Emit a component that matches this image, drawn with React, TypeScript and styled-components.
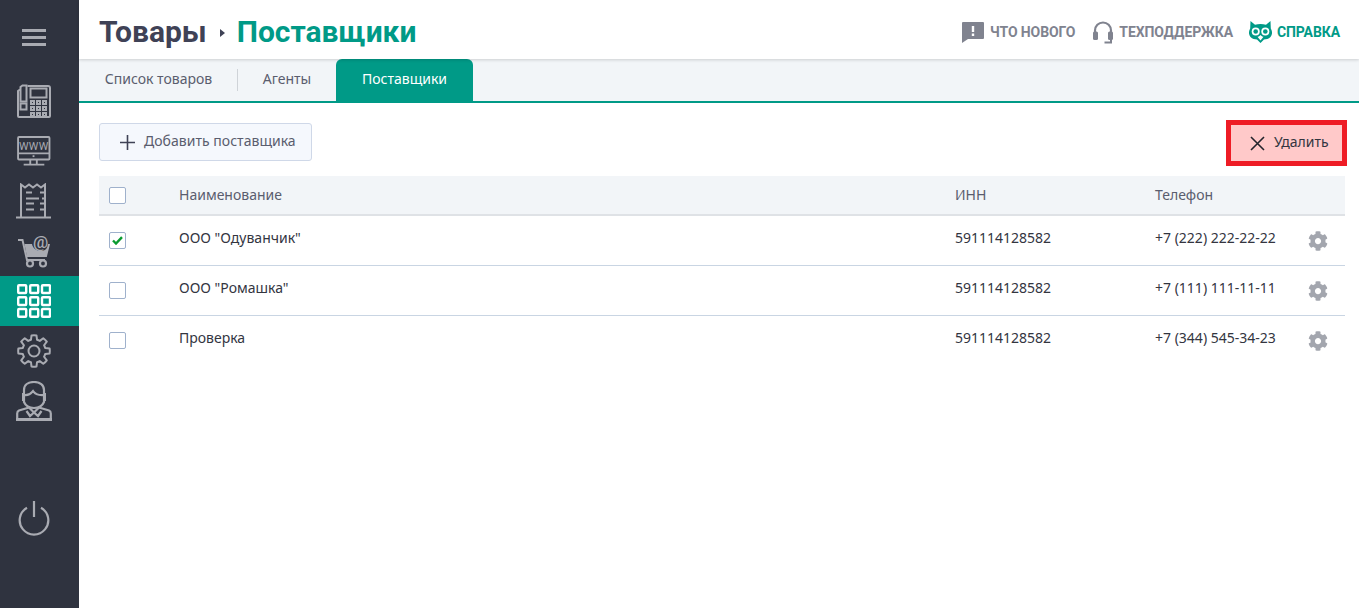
import React from "react";
import styled, { createGlobalStyle } from "styled-components";
import { FaCog } from "react-icons/fa";

const Global = createGlobalStyle`
  html, body { margin: 0; padding: 0; height: 100%; background: #fff; }
  body { font-family: "Noto Sans", "Open Sans", sans-serif; overflow: hidden; }
  #root { height: 100%; }
`;

const TEAL = "#009a87";

const Page = styled.div`
  display: flex;
  width: 1359px;
  height: 608px;
`;
const Sidebar = styled.nav`
  width: 79px;
  flex: none;
  background: #2f333f;
  display: flex;
  flex-direction: column;
  align-items: stretch;
`;
const Burger = styled.div`
  height: 74px;
  padding: 0 11px 2px 0;
  display: flex;
  align-items: center;
  justify-content: center;
`;
const NavItem = styled.div<{ $active?: boolean }>`
  height: 50px;
  padding-right: 11px;
  display: flex;
  align-items: center;
  justify-content: center;
  background: ${(p) => (p.$active ? TEAL : "transparent")};
  color: ${(p) => (p.$active ? "#fff" : "#a9abb2")};
`;
const PowerItem = styled.div`
  margin-top: 71px;
  height: 42px;
  padding-right: 11px;
  display: flex;
  align-items: center;
  justify-content: center;
  color: #a9abb2;
`;
const Main = styled.main`
  flex: 1;
  min-width: 0;
  display: flex;
  flex-direction: column;
`;
const Header = styled.header`
  height: 59px;
  flex: none;
  display: flex;
  align-items: center;
  justify-content: space-between;
  padding: 0 19px 0 20px;
  box-shadow: 0 1px 3px rgba(0, 0, 0, 0.16);
  position: relative;
  z-index: 1;
`;
const Breadcrumb = styled.div`
  display: flex;
  align-items: center;
  font-family: Roboto, "Liberation Sans", sans-serif;
  font-weight: 700;
  font-size: 30px;
  line-height: 34px;
  margin-top: 5px;
`;
const Crumb = styled.span<{ $current?: boolean }>`
  color: ${(p) => (p.$current ? TEAL : "#3f4256")};
`;
const CrumbArrow = styled.span`
  width: 0;
  height: 0;
  margin: 2px 12px 0 13px;
  border-left: 5px solid #3f4256;
  border-top: 4px solid transparent;
  border-bottom: 4px solid transparent;
`;
const HeaderLinks = styled.div`
  display: flex;
  align-items: center;
  margin-top: 5px;
`;
const HeaderLink = styled.a<{ $teal?: boolean; $gap: number; $ml: number }>`
  display: flex;
  align-items: center;
  gap: ${(p) => p.$gap}px;
  margin-left: ${(p) => p.$ml}px;
  font-family: Roboto, "Liberation Sans", sans-serif;
  font-weight: 700;
  font-size: 14px;
  letter-spacing: -0.1px;
  color: ${(p) => (p.$teal ? TEAL : "#80838f")};
`;
const Tabs = styled.div`
  height: 42px;
  flex: none;
  background: #f2f5f8;
  border-bottom: 2px solid ${TEAL};
  display: flex;
  align-items: stretch;
`;
const Tab = styled.div<{ $active?: boolean; $w: number; $divider?: boolean }>`
  width: ${(p) => p.$w}px;
  padding-bottom: 3px;
  box-sizing: border-box;
  display: flex;
  align-items: center;
  justify-content: center;
  font-size: 14px;
  color: ${(p) => (p.$active ? "#fff" : "#5a5d6e")};
  background: ${(p) => (p.$active ? TEAL : "transparent")};
  border-radius: ${(p) => (p.$active ? "6px 6px 0 0" : "0")};
  position: relative;
  ${(p) =>
    p.$divider
      ? `&::after { content: ""; position: absolute; right: 0; top: 10px; height: 22px; width: 1px; background: #cfd3d8; }`
      : ""}
`;
const Content = styled.div`
  padding: 20px 14px 0 20px;
`;
const Toolbar = styled.div`
  display: flex;
  align-items: flex-start;
  justify-content: space-between;
  height: 53px;
`;
const AddButton = styled.button`
  width: 213px;
  height: 38px;
  box-sizing: border-box;
  background: #f5f8fd;
  border: 1px solid #cfd8e8;
  border-radius: 3px;
  display: flex;
  align-items: center;
  gap: 9px;
  padding: 0 0 0 20px;
  font: inherit;
  font-size: 14px;
  color: #5a5d6e;
`;
const ButtonLabel = styled.span<{ $lift: number }>`
  margin-bottom: ${(p) => p.$lift}px;
  letter-spacing: 0.03px;
`;
const DeleteButton = styled.button`
  width: 121px;
  height: 46px;
  margin: -3px -2px 0 0;
  box-sizing: border-box;
  background: #ffc9c9;
  border: 5px solid #ee1c25;
  display: flex;
  align-items: center;
  gap: 9px;
  padding: 0 0 0 19px;
  font: inherit;
  font-size: 14px;
  color: #33353f;
`;
const Row = styled.div<{ $head?: boolean; $last?: boolean }>`
  display: grid;
  grid-template-columns: 80px 776px 200px 1fr;
  align-items: center;
  box-sizing: border-box;
  height: ${(p) => (p.$head ? "40px" : "50px")};
  background: ${(p) => (p.$head ? "#f2f5f8" : "transparent")};
  border-bottom: ${(p) =>
    p.$head ? "2px solid #dfe2e6" : p.$last ? "1px solid transparent" : "1px solid #c9d5e3"};
  font-size: 14px;
  color: ${(p) => (p.$head ? "#5a5d6e" : "#33353f")};
`;
const HeadCell = styled.div`
  white-space: nowrap;
  padding-bottom: 2px;
`;
const Cell = styled.div`
  white-space: nowrap;
  padding-bottom: 6px;
`;
const CheckCell = styled.div`
  padding-left: 10px;
  display: flex;
  align-items: center;
`;
const Check = styled.span`
  width: 17px;
  height: 17px;
  box-sizing: border-box;
  border: 1px solid #9fb1cc;
  border-radius: 2px;
  background: #fff;
  display: flex;
  align-items: center;
  justify-content: center;
`;
const PhoneCell = styled.div`
  display: flex;
  align-items: center;
  justify-content: space-between;
  padding-right: 17px;
  white-space: nowrap;
`;
const PhoneText = styled.span`
  padding-bottom: 6px;
`;
const Cog = styled(FaCog)`
  width: 20px;
  height: 20px;
  color: #a3a6ae;
`;

const S = { fill: "none", stroke: "currentColor", strokeWidth: 2 } as const;

const IconPhone = () => (
  <svg width="34" height="34" viewBox="0 0 34 34" {...S}>
    <path d="M3 5.500L1 7v25a1 1 0 0 0 1 1h30a1 1 0 0 0 1-1V4a2 2 0 0 0-2-2H10.500" />
    <path d="M3.500 17.500V3l2-1.500h4V17.500z" />
    <rect x="3.500" y="19.500" width="6" height="6" />
    <rect x="13.500" y="4.500" width="16" height="9" />
    <g fill="currentColor" stroke="none">
      {[13, 19, 25].flatMap((x) =>
        [16, 22, 28].map((y) => (
          <path key={`${x}-${y}`} fillRule="evenodd" d={`M${x} ${y}h5v5h-5zM${x + 2} ${y + 2}v1h1v-1z`} />
        ))
      )}
    </g>
  </svg>
);
const IconWww = () => (
  <svg width="34" height="30" viewBox="0 0 36 32" {...S}>
    <rect x="1" y="1" width="33.500" height="24" rx="1" />
    <path d="M1 18.500h33.500M14 25v6M21 25v6M7 30.500h22" />
    <rect x="16.500" y="20.500" width="2" height="2" fill="currentColor" stroke="none" />
    <text x="17.700" y="14.800" textAnchor="middle" fontFamily="Roboto, Liberation Sans, sans-serif" fontSize="11.500" stroke="none" fill="currentColor" letterSpacing="0.300">WWW</text>
  </svg>
);
const IconReceipt = () => (
  <svg width="38" height="36" viewBox="0 0 38 36" {...S}>
    <path d="M6 34V1.500l4 3 4-3 4 3 4-3 4 3 4-3V34" />
    <path d="M1 34.500h35" />
    <path d="M11 9.500h6M25 9.500h4M11 15.500h13M27 15.500h3M11 20.500h8M25 20.500h4M11 26.500h8M25 26.500h4" />
  </svg>
);
const IconCart = () => (
  <svg width="34" height="34" viewBox="0 0 34 34" overflow="visible">
    <path d="M1 6h4.500L10 26h18" fill="none" stroke="currentColor" strokeWidth="2" />
    <path d="M7.500 10h7.500c.8 4 4 7 9 7 4 0 6.500-2.500 7-7l2 0-3.200 13H10z" fill="currentColor" />
    <circle cx="13" cy="29.500" r="3" fill="none" stroke="currentColor" strokeWidth="2.200" />
    <circle cx="26" cy="29.500" r="3" fill="none" stroke="currentColor" strokeWidth="2.200" />
    <text x="23.500" y="14" textAnchor="middle" fontFamily="Roboto, Liberation Sans, sans-serif" fontSize="17" fontWeight="500" fill="currentColor">@</text>
  </svg>
);
const IconGrid = () => (
  <svg width="34" height="34" viewBox="0 0 34 34" fill="none" stroke="currentColor" strokeWidth="2.400">
    {[1.200, 13.200, 25].flatMap((x) =>
      [1.200, 13.200, 25].map((y) => (
        <rect key={`${x}-${y}`} x={x} y={y} width="8" height="7.800" rx="0.800" />
      ))
    )}
  </svg>
);
const gearPath = (cx: number, cy: number, ro: number, ri: number, n: number) => {
  const pts: string[] = [];
  for (let i = 0; i < n; i++) {
    const a = (i / n) * Math.PI * 2 - Math.PI / 2;
    const w = Math.PI / n;
    const p = (r: number, t: number) => `${(cx + r * Math.cos(t)).toFixed(2)} ${(cy + r * Math.sin(t)).toFixed(2)}`;
    pts.push(`${i ? "L" : "M"}${p(ri, a - w * 0.68)}`, `L${p(ro, a - w * 0.4)}`, `A${ro} ${ro} 0 0 1 ${p(ro, a + w * 0.4)}`, `L${p(ri, a + w * 0.68)}`);
    pts.push(`A${ri} ${ri} 0 0 1 ${p(ri, a + 2 * w - w * 0.68)}`);
  }
  return pts.join(" ") + "Z";
};
const IconGear = () => (
  <svg width="34" height="34" viewBox="0 0 34 34" fill="none" stroke="currentColor" strokeWidth="2" strokeLinejoin="round">
    <path d={gearPath(17, 17, 15.800, 11.600, 8)} />
    <circle cx="17" cy="17" r="5.500" />
  </svg>
);
const IconAgent = () => (
  <svg width="36" height="40" viewBox="0 0 36 40" fill="none" stroke="currentColor" strokeWidth="2.200">
    <path d="M8 21V9c0-5 4-8 10-8s10 3 10 8v12c-1.500 3.500-5 6-10 6s-8.500-2.500-10-6z" />
    <path d="M8 14c6 1 8-3 9-4 2 3 6 4.500 11 4" />
    <path fill="currentColor" stroke="none" d="M6 12h2.500v8H6zM27.500 12H30v8h-2.500z" />
    <path d="M13 26.500L3 29.500c-1.200.6-1.800 1.600-1.800 3V38h33.600v-5.500c0-1.400-.6-2.400-1.800-3L23 26.500" />
    <path d="M13 26.500l5 5 5-5M18 31.500l-4 3.500-3.500-5M18 31.500l4 3.500 3.500-5" />
    <path d="M0 38.500h36" strokeWidth="3" />
  </svg>
);
const IconPower = () => (
  <svg width="32" height="36" viewBox="0 0 32 36" fill="none" stroke="currentColor" strokeWidth="2.200">
    <path d="M16 1v16" />
    <path d="M9 7.800a14.300 14.300 0 1 0 14 0" />
  </svg>
);
const IconSpeech = () => (
  <svg width="22" height="21" viewBox="0 0 22 21">
    <path fillRule="evenodd" fill="#80838f" d="M1 0h20a1 1 0 0 1 1 1v15a1 1 0 0 1-1 1H6l-6 4V1a1 1 0 0 1 1-1zM9.800 4v6h2.400V4zM9.800 11.500V14h2.400v-2.500z" />
  </svg>
);
const IconHeadset = () => (
  <svg width="20" height="23" viewBox="0 0 20 23" fill="none" stroke="#80838f">
    <path strokeWidth="2.200" d="M2 13V9.500a8 8 0 0 1 16 0V13" />
    <rect x="0" y="10.500" width="5" height="8.500" rx="1.500" fill="#80838f" stroke="none" />
    <rect x="15" y="10.500" width="5" height="8.500" rx="1.500" fill="#80838f" stroke="none" />
    <path strokeWidth="2" d="M18 18v3.500h-6.500" />
  </svg>
);
const IconOwl = () => (
  <svg width="23" height="22" viewBox="0 0 23 22">
    <path fill="#009a87" d="M1.500 0l4.500 3.800c3.500-1 7.500-1 11 0L21.500 0l.3 7.500c1.700 3 1.700 6-.3 8.500-1.800 2-4.500 2.300-6.500 2.500L11.500 22 8 18.500c-2-.2-4.700-.5-6.500-2.500-2-2.500-2-5.500-.3-8.500z" />
    <path fill="#fff" d="M8.500 15.800c1 0 2-.6 3-1.800 1 1.200 2 1.800 3 1.800L11.500 19.500z" />
    <circle cx="6.700" cy="10.500" r="4" fill="#fff" />
    <circle cx="16.300" cy="10.500" r="4" fill="#fff" />
    <circle cx="6.700" cy="10.500" r="2.300" fill="#009a87" />
    <circle cx="16.300" cy="10.500" r="2.300" fill="#009a87" />
  </svg>
);
const IconPlus = () => (
  <svg width="15" height="15" viewBox="0 0 15 15" stroke="#3f4256" strokeWidth="1.600">
    <path d="M7.500 0v15M0 7.500h15" />
  </svg>
);
const IconX = () => (
  <svg width="15" height="15" viewBox="0 0 15 15" stroke="#23242c" strokeWidth="1.600">
    <path d="M1 1l13 13M14 1L1 14" />
  </svg>
);
const IconTick = () => (
  <svg width="11" height="9" viewBox="0 0 11 9" fill="none" stroke="#0a9b2f" strokeWidth="2.400">
    <path d="M1 4.500l3 3L10 1.200" />
  </svg>
);

const suppliers = [
  { name: 'ООО "Одуванчик"', inn: "591114128582", phone: "+7 (222) 222-22-22", checked: true },
  { name: 'ООО "Ромашка"', inn: "591114128582", phone: "+7 (111) 111-11-11", checked: false },
  { name: "Проверка", inn: "591114128582", phone: "+7 (344) 545-34-23", checked: false },
];

export default function App() {
  return (
    <Page>
      <Global />
      <Sidebar>
        <Burger>
          <svg width="24" height="17" viewBox="0 0 24 17" fill="#a9abb2">
            <rect width="24" height="3" />
            <rect y="7" width="24" height="3" />
            <rect y="14" width="24" height="3" />
          </svg>
        </Burger>
        <NavItem><IconPhone /></NavItem>
        <NavItem><IconWww /></NavItem>
        <NavItem><IconReceipt /></NavItem>
        <NavItem><IconCart /></NavItem>
        <NavItem $active><IconGrid /></NavItem>
        <NavItem><IconGear /></NavItem>
        <NavItem><IconAgent /></NavItem>
        <PowerItem><IconPower /></PowerItem>
      </Sidebar>
      <Main>
        <Header>
          <Breadcrumb>
            <Crumb>Товары</Crumb>
            <CrumbArrow />
            <Crumb $current>Поставщики</Crumb>
          </Breadcrumb>
          <HeaderLinks>
            <HeaderLink $gap={6} $ml={0}><IconSpeech />ЧТО НОВОГО</HeaderLink>
            <HeaderLink $gap={6} $ml={18}><IconHeadset />ТЕХПОДДЕРЖКА</HeaderLink>
            <HeaderLink $teal $gap={5} $ml={16}><IconOwl />СПРАВКА</HeaderLink>
          </HeaderLinks>
        </Header>
        <Tabs>
          <Tab $w={159} $divider>Список товаров</Tab>
          <Tab $w={98}>Агенты</Tab>
          <Tab $w={137} $active>Поставщики</Tab>
        </Tabs>
        <Content>
          <Toolbar>
            <AddButton><IconPlus /><ButtonLabel $lift={3}>Добавить поставщика</ButtonLabel></AddButton>
            <DeleteButton><IconX /><ButtonLabel $lift={4}>Удалить</ButtonLabel></DeleteButton>
          </Toolbar>
          <Row $head>
            <CheckCell><Check /></CheckCell>
            <HeadCell>Наименование</HeadCell>
            <HeadCell>ИНН</HeadCell>
            <HeadCell>Телефон</HeadCell>
          </Row>
          {suppliers.map((s, i) => (
            <Row key={s.name} $last={i === suppliers.length - 1}>
              <CheckCell><Check>{s.checked && <IconTick />}</Check></CheckCell>
              <Cell>{s.name}</Cell>
              <Cell>{s.inn}</Cell>
              <PhoneCell><PhoneText>{s.phone}</PhoneText><Cog /></PhoneCell>
            </Row>
          ))}
        </Content>
      </Main>
    </Page>
  );
}
